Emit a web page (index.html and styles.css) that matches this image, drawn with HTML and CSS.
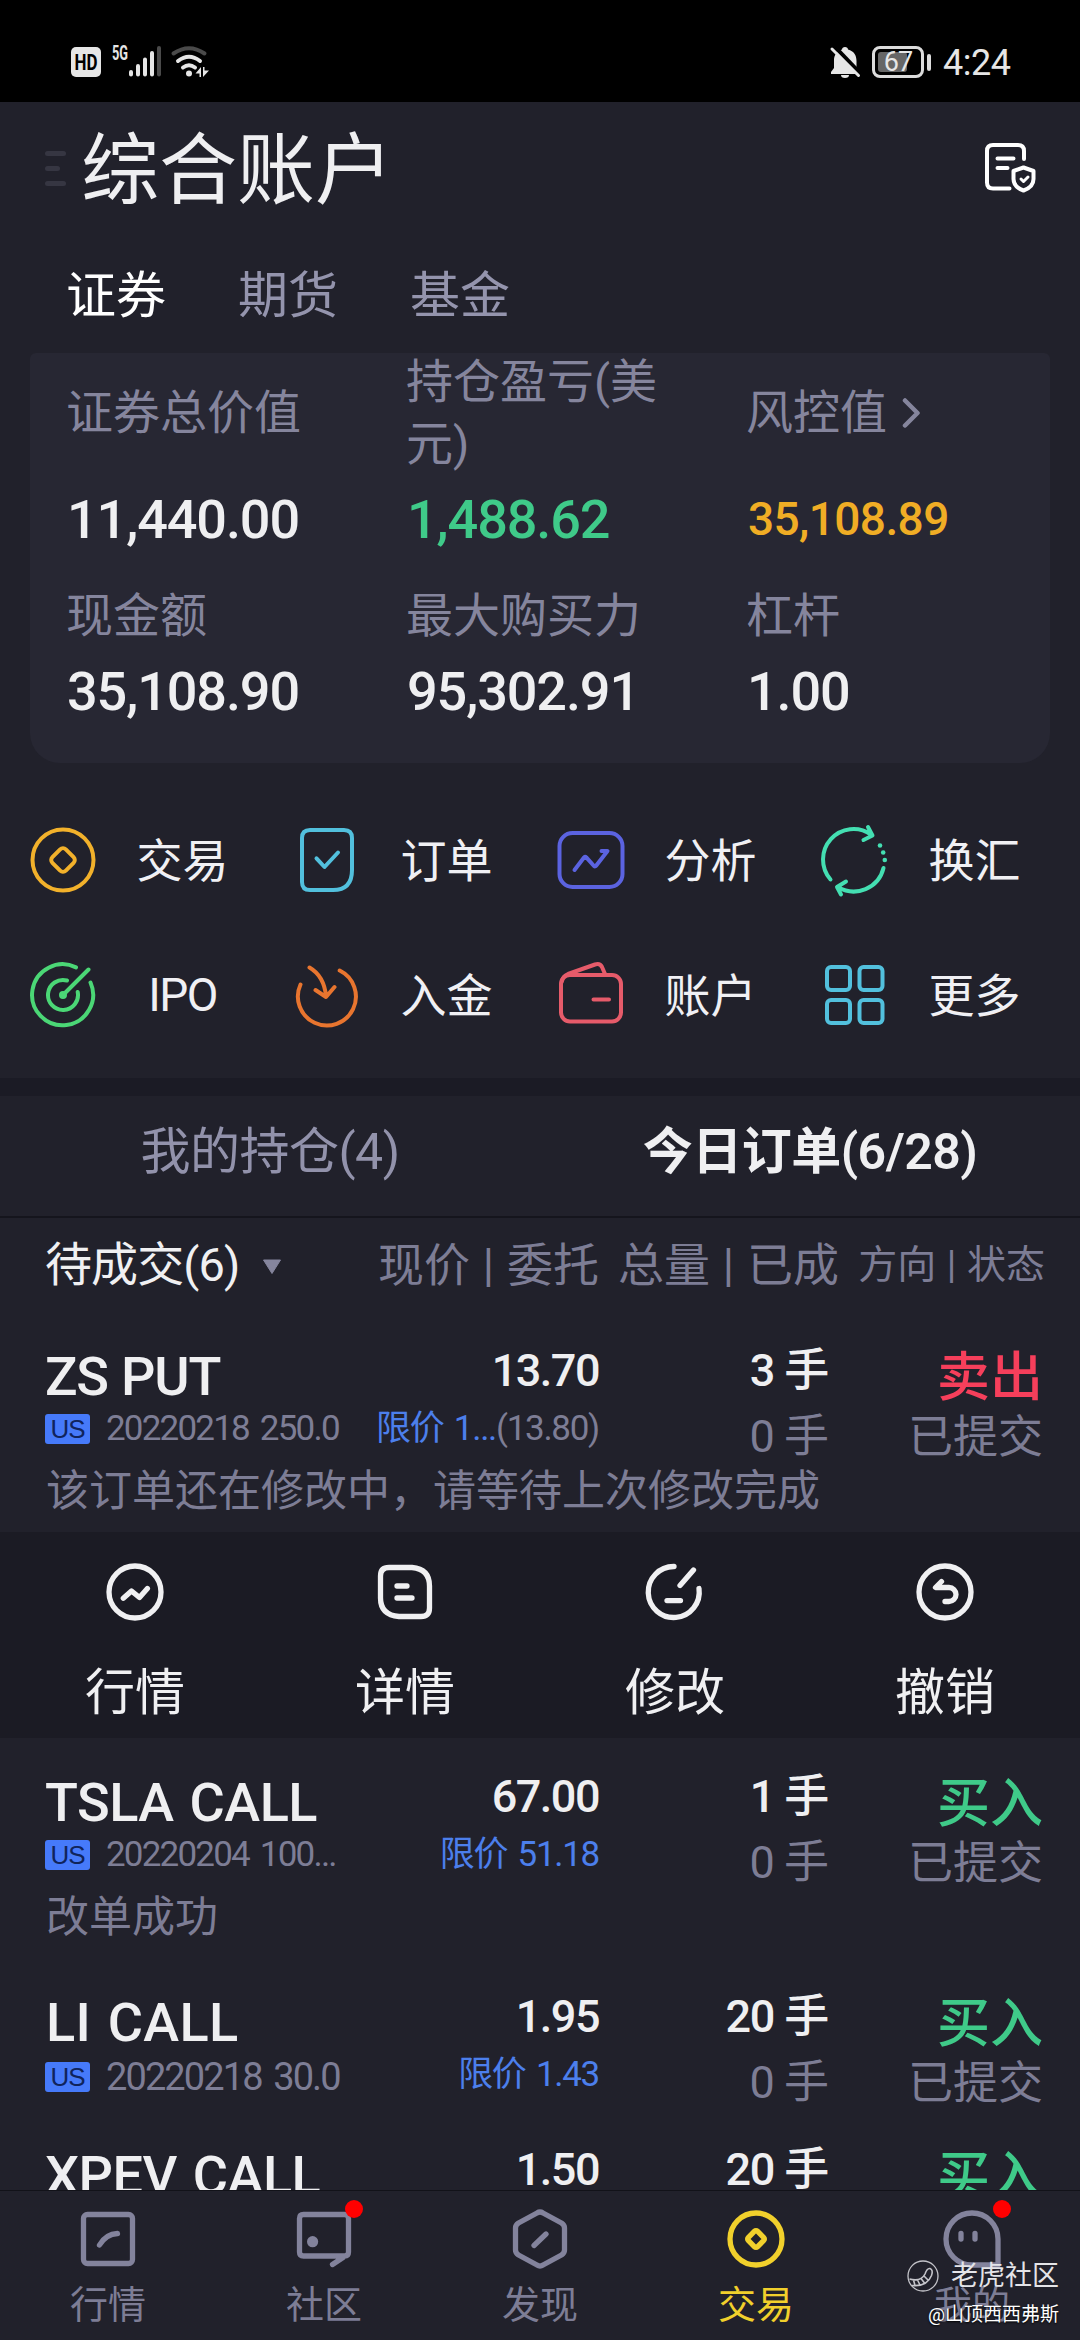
FILE: index.html
```html
<!DOCTYPE html>
<html lang="zh-CN">
<head>
<meta charset="utf-8">
<title>综合账户</title>
<link rel="stylesheet" href="styles.css">
</head>
<body>
<div class="status">
  <svg class="status-left" viewBox="66 40 150 44" width="150" height="44">
    <rect x="71" y="47" width="30" height="30" rx="5" fill="#e6e6e6"/>
    <text x="86" y="69.500" text-anchor="middle" class="hd" textLength="23" lengthAdjust="spacingAndGlyphs">HD</text>
    <text x="112" y="59.500" class="net" textLength="16" lengthAdjust="spacingAndGlyphs">5G</text>
    <g stroke-width="4" stroke-linecap="round" stroke="#e6e6e6">
      <path d="M131 72v2.500M138 66v8.500M145 59.500v15M152 53v21.500"/>
      <path d="M159 48v26.500" stroke="#4a4a4a"/>
    </g>
    <g fill="none" stroke-width="4" stroke-linecap="round" stroke="#e6e6e6">
      <path d="M173.500 53.500q15.500-10.500 31 0" stroke="#4a4a4a"/>
      <path d="M178 61q11-8.500 22 0M183 67.500q6-4.500 12 0"/>
    </g>
    <circle cx="189" cy="73.500" r="3" fill="#e6e6e6"/>
    <path d="M201 67v10h-1.500v-3.500h-4zM203 77V67h1.500v3.500h4.500z" fill="#e6e6e6"/>
  </svg>
  <svg class="bell" viewBox="829 44 34 36" width="34" height="36">
    <path d="M845 47c1.800 0 3 1 3 2.500 6 1.500 8.500 6 8.500 11.500v6l3.500 5v2h-29v-2l3-4v-8c0-5 3-9 8-10.500 0-1.500 1.200-2.500 3-2.500zM841 75h8a4 3 0 0 1-8 0z" fill="#e6e6e6"/>
    <path d="M834 46l28 29" stroke="#000" stroke-width="4"/>
    <path d="M832 49l26.500 26.500" stroke="#e6e6e6" stroke-width="3" stroke-linecap="round"/>
  </svg>
  <div class="battery"><span class="battery-fill"></span><span class="battery-num">67</span></div>
  <span class="battery-nub"></span>
  <span class="clock">4:24</span>
</div>

<header class="head">
  <div class="menu"><i></i><i class="short"></i><i></i></div>
  <h1>综合账户</h1>
  <svg class="doc" viewBox="983 141 54 54" width="54" height="54" fill="none" stroke="#fff" stroke-width="4" stroke-linecap="round" stroke-linejoin="round">
    <path d="M1024 159v-8q0-6-6-6h-25q-6 0-6 6v31.500q0 6 6 6h16.500"/>
    <path d="M997.500 158.500h16M997.500 168h10"/>
    <path d="M1023.500 167.500l10 3.500v8q0 8-10 11.500q-10-3.500-10-11.500v-8z"/>
    <path d="M1021 179l2.500 2.500 4.500-4.500" stroke-width="3"/>
  </svg>
</header>

<nav class="kinds"><b class="on">证券</b><b>期货</b><b>基金</b></nav>

<section class="card">
  <div class="metric"><div class="label tall">证券总价值</div><div class="num">11,440.00</div></div>
  <div class="metric"><div class="label tall">持仓盈亏(美<br>元)</div><div class="num up">1,488.62</div></div>
  <div class="metric"><div class="label tall">风控值<svg viewBox="0 0 20 32" width="20" height="32"><path d="M3 3.500L15.500 16 3 28.500" fill="none" stroke="#85859d" stroke-width="4.500" stroke-linecap="round" stroke-linejoin="round"/></svg></div><div class="num risk">35,108.89</div></div>
  <div class="metric"><div class="label">现金额</div><div class="num low">35,108.90</div></div>
  <div class="metric"><div class="label">最大购买力</div><div class="num low">95,302.91</div></div>
  <div class="metric"><div class="label">杠杆</div><div class="num low">1.00</div></div>
</section>

<section class="quick">
  <div class="tool"><svg viewBox="-38 -38 76 76" stroke="#f2b12b"><circle r="30.500"/><rect x="-9.500" y="-9.500" width="19" height="19" rx="4" transform="rotate(45)"/></svg><span>交易</span></div>
  <div class="tool"><svg viewBox="-38 -38 76 76" stroke="#52c0dd"><path d="M-17-30H17q8 0 8 8V10Q25 30 6 30H-17q-8 0-8-8V-22q0-8 8-8z"/><path d="M-10.500-1.700L-2.500 7 11-7.500"/></svg><span>订单</span></div>
  <div class="tool"><svg viewBox="-38 -38 76 76" stroke="#5b63e0"><rect x="-31.500" y="-27" width="63" height="54" rx="13"/><path d="M-16.500 10L-7-2.500Q-6-4-4.700-2.700L3 6Q4.200 7 5.300 5.500L16.500-9H10.500"/></svg><span>分析</span></div>
  <div class="tool"><svg viewBox="-38 -38 76 76" stroke="#44dfb2"><path d="M-24.500 19.500A30.500 30.500 0 0 1 16-25.500M28.500 8A30.500 30.500 0 0 1-17 27M13-33L17.500-24.500 8.500-20M-9 21.500L-18 27-14 34.500"/><g fill="#44dfb2" stroke="none"><circle cx="25" cy="-14.500" r="2.300"/><circle cx="28.200" cy="-7.500" r="2.300"/><circle cx="29.800" r="2.300"/></g></svg><span>换汇</span></div>
  <div class="tool"><svg viewBox="-38 -38 76 76" stroke="#4bd776"><path d="M13-27.600A30.500 30.500 0 1 0 27.500-12.500M4-14.500A15 15 0 1 0 14.700-3M0 0L25.500-25.500"/><circle r="2" fill="#4bd776"/></svg><span class="latin">IPO</span></div>
  <div class="tool"><svg viewBox="-38 -38 76 76" stroke="#e8752f"><path d="M-26.500-10.500A29 29 0 1 0 12.700-24.500M-17.500-27.500Q-3-19-1 1M-11.500-5L-1 2 7.500-8"/></svg><span>入金</span></div>
  <div class="tool"><svg viewBox="-38 -38 76 76" stroke="#e65b6a"><rect x="-30" y="-20" width="60" height="46.500" rx="9"/><path d="M-29-14Q-28-19-23-21L4-30.500Q9-32 11-28L14-21M2.500 4.500H18"/></svg><span>账户</span></div>
  <div class="tool"><svg viewBox="-38 -38 76 76" stroke="#52c0dd"><rect x="-28" y="-28" width="23" height="23" rx="4"/><rect x="4.500" y="-28" width="23" height="23" rx="4"/><rect x="-28" y="5" width="23" height="23" rx="4"/><rect x="4.500" y="5" width="23" height="23" rx="4"/></svg><span>更多</span></div>
</section>

<div class="band"></div>
<div class="switch"><div>我的持仓(4)</div><div class="on">今日订单(6/28)</div></div>

<main class="orders">
  <div class="filter">
    <div class="pick">待成交(6)<svg viewBox="0 0 20 16" width="20" height="16"><path d="M1.500 1h17L10 14.500z" fill="#85859d" stroke="#85859d" stroke-linejoin="round"/></svg></div>
    <div>现价 | 委托</div><div>总量 | 已成</div><div class="small">方向 | 状态</div>
  </div>

  <article class="order">
    <div class="name tight"><h2>ZS PUT</h2><p><em>US</em>20220218 250.0</p></div>
    <div class="price"><strong>13.70</strong><p><a>限价 1...</a>(13.80)</p></div>
    <div class="qty"><strong>3 手</strong><p>0 手</p></div>
    <div class="side"><strong class="sell">卖出</strong><p>已提交</p></div>
    <div class="note">该订单还在修改中，请等待上次修改完成</div>
  </article>

  <div class="actions">
    <div><svg viewBox="-32 -32 64 64"><circle r="26"/><path d="M-11.700 6.200L-3.500-1 4.500 5.500 12.400-3.400"/></svg>行情</div>
    <div><svg viewBox="-32 -32 64 64"><path d="M-16-24.500H7Q24.500-23 24.500-6V16q0 8.500-8.500 8.500H-6Q-24.500 23-24.500 6V-16q0-8.500 8.500-8.500zM-8-6H2M-8 6H7"/></svg>详情</div>
    <div><svg viewBox="-32 -32 64 64"><path d="M-1-25.500A25.500 25.500 0 1 0 24-3.500M18.500-22L5-6.500M-8 8.600H5.500"/></svg>修改</div>
    <div><svg viewBox="-32 -32 64 64"><circle r="26"/><path d="M-3.500-10.500L-9.500-4.500H4a7 7 0 0 1 0 14H0"/></svg>撤销</div>
  </div>

  <article class="order">
    <div class="name"><h2>TSLA CALL</h2><p><em>US</em>20220204 100...</p></div>
    <div class="price"><strong>67.00</strong><p><a>限价 51.18</a></p></div>
    <div class="qty"><strong>1 手</strong><p>0 手</p></div>
    <div class="side"><strong>买入</strong><p>已提交</p></div>
    <div class="note">改单成功</div>
  </article>
  <article class="order">
    <div class="name wide"><h2>LI CALL</h2><p><em>US</em>20220218 30.0</p></div>
    <div class="price"><strong>1.95</strong><p><a>限价 1.43</a></p></div>
    <div class="qty"><strong>20 手</strong><p>0 手</p></div>
    <div class="side"><strong>买入</strong><p>已提交</p></div>
  </article>
  <article class="order">
    <div class="name"><h2>XPEV CALL</h2></div>
    <div class="price"><strong>1.50</strong></div>
    <div class="qty"><strong>20 手</strong></div>
    <div class="side"><strong>买入</strong></div>
  </article>
</main>

<footer class="tabbar">
  <div><svg viewBox="-32 -32 64 64"><rect x="-24.500" y="-24.500" width="49" height="49" rx="4"/><path d="M-8.500 6Q-2-5 9.500-5.500"/></svg>行情</div>
  <div><svg viewBox="-32 -32 64 64"><path d="M-20.500-24.500h41q4 0 4 4V13q0 4-4 4h-41q-4 0-4-4V-20.500q0-4 4-4zM19 18.500L8.500 25.500"/><circle cx="-11.400" cy="2.700" r="5.600" fill="#83839c" stroke="none"/></svg><i class="dot"></i>社区</div>
  <div><svg viewBox="-32 -32 64 64"><path d="M-3-26Q0-28 3-26L21.500-16Q24.500-14 24.500-11V11Q24.500 14 21.500 16L3 26Q0 28-3 26L-21.500 16Q-24.500 14-24.500 11V-11Q-24.500-14-21.500-16zM-6 6.500L6-5"/></svg>发现</div>
  <div class="on"><svg viewBox="-32 -32 64 64"><circle r="26"/><rect x="-6.500" y="-6.500" width="13" height="13" rx="2" transform="rotate(45)"/></svg>交易</div>
  <div><svg viewBox="-32 -32 64 64"><path d="M26 26V0A26 26 0 1 0 0 26zM-11-5.500v5.500M3-5.500v5.500"/></svg><i class="dot"></i>我的</div>
</footer>

<div class="mark">
  <div class="mark-brand">
    <svg viewBox="-17 -17 34 34" width="34" height="34" fill="none" stroke="#c4c4ca" stroke-width="1.300"><circle r="15"/><path d="M-13.500 3Q-2 6 2-2Q4-8 7-7.500Q10.500-6 8.500-.5Q4 11-11 9.500M-9.500 4l1.500 5.500M-5.500 4l2.500 5M-2 2.500l3.500 4.500M1 0l4 4" stroke-width="1.600"/></svg>
    <span>老虎社区</span>
  </div>
  <div class="mark-user">@山顶西西弗斯</div>
</div>
</body>
</html>
```
FILE: styles.css
```css
* { box-sizing: border-box; margin: 0; padding: 0; }
body {
  position: relative;
  width: 1080px;
  height: 2340px;
  display: flex;
  flex-direction: column;
  overflow: hidden;
  background: #21212b;
  color: #efeff1;
  font-family: Roboto, "Noto Sans CJK SC", sans-serif;
  white-space: nowrap;
}
svg { display: block; flex: none; }
i, em { font-style: normal; }

.status {
  flex: none;
  height: 102px;
  padding: 40px 0 0 66px;
  background: #000;
  display: flex;
  align-items: flex-start;
  color: #e6e6e6;
}
.hd { font: 700 22px Roboto, sans-serif; fill: #000; }
.net { font: 700 20px Roboto, sans-serif; fill: #e6e6e6; }
.bell { margin: 4px 0 0 613px; }
.battery {
  position: relative;
  width: 52px;
  height: 32px;
  margin: 6px 0 0 9px;
  border: 3px solid #dcdcdc;
  border-radius: 8px;
  font-size: 27px;
  line-height: 27px;
  text-align: center;
}
.battery-fill { position: absolute; left: 3px; top: 3px; width: 29px; height: 20px; border-radius: 3px; background: #666; }
.battery-num { position: relative; letter-spacing: -1px; }
.battery-nub { width: 4px; height: 17px; margin: 14px 0 0 3px; border-radius: 2px; background: #dcdcdc; }
.clock { margin: 3px 0 0 12px; font-size: 36px; line-height: 40px; letter-spacing: -.5px; }

.head { flex: none; height: 132px; padding: 0 43px 0 45px; display: flex; align-items: center; }
.menu { width: 21px; display: flex; flex-direction: column; gap: 10px; }
.menu i { height: 5px; border-radius: 3px; background: #363642; }
.menu .short { width: 15px; }
h1 { margin-left: 15px; flex: 1; font-size: 78px; line-height: 100px; font-weight: 400; padding-top: 7px; }

.kinds { flex: none; height: 119px; padding: 5px 0 0 66px; display: flex; align-items: center; gap: 72px; }
.kinds b { font-size: 50px; line-height: 70px; font-weight: 400; color: #9494ad; }
.kinds .on { color: #fff; }

.card {
  flex: none;
  height: 410px;
  margin: 0 30px;
  padding-left: 36px;
  border-radius: 6px 6px 30px 30px;
  background: #272733;
  display: grid;
  grid-template-columns: 340px 340px 1fr;
  grid-template-rows: 233px 1fr;
}
.label { height: 60px; display: flex; align-items: center; font-size: 47px; line-height: 62px; color: #85859d; }
.label.tall { height: 124px; margin: -2px 0 15px; }
.label svg { margin-left: 15px; }
.num { font-size: 54px; line-height: 60px; font-weight: 500; letter-spacing: -1.1px; padding-left: 1px; }
.num.low { margin-top: 16px; }
.num.up { color: #3fca89; }
.num.risk { margin-top: -1px; padding-left: 2px; font-size: 46px; letter-spacing: -.6px; color: #f0ad25; }

.quick { flex: none; height: 315px; padding: 29px 0 0 19px; display: grid; grid-template: 135px 135px / repeat(4, 264px); }
.tool { display: flex; align-items: center; font-size: 46px; line-height: 60px; color: #f0f0f4; }
.tool svg { width: 76px; height: 76px; margin: 0 6px; fill: none; stroke-width: 4; stroke-linecap: round; stroke-linejoin: round; }
.tool span { width: 151px; padding-top: 2px; text-align: center; }
.tool .latin { padding-top: 0; letter-spacing: -1.5px; }

.band { flex: none; height: 18px; background: #1b1b25; }
.switch {
  flex: none;
  height: 122px;
  border-bottom: 2px solid #15151d;
  display: grid;
  grid-template-columns: 1fr 1fr;
  align-items: center;
  text-align: center;
  padding-bottom: 8px;
  font-size: 50px;
  line-height: 70px;
  color: #9292ab;
  letter-spacing: -.5px;
}
.switch .on { color: #efeff1; font-weight: 600; }

.orders { flex: none; height: 972px; overflow: hidden; }
.filter { height: 94px; padding-left: 45px; display: grid; grid-template-columns: 295px 259px 240px 206px; align-items: center; text-align: right; font-size: 46px; line-height: 60px; color: #7d7d95; word-spacing: 1.5px; }
.pick { display: flex; align-items: center; font-size: 47px; letter-spacing: -.9px; color: #f0f0f2; }
.pick svg { margin: 4px 0 0 23px; }
.filter .small { font-size: 39px; word-spacing: 1px; }

.order { padding-left: 45px; display: grid; grid-template-columns: 295px 259px 229px 215px; grid-template-rows: 153px; color: #7d7d95; text-align: right; }
.order strong { display: block; font-size: 45px; line-height: 50px; font-weight: 500; color: #efeff1; }
.name { padding-top: 35px; text-align: left; }
.name h2 { font-size: 54px; line-height: 60px; font-weight: 500; letter-spacing: -.5px; word-spacing: 3px; color: #efeff1; }
.name p { display: flex; align-items: center; height: 44px; font-size: 35px; line-height: 44px; letter-spacing: -1.8px; word-spacing: 4px; }
.name.tight h2 { letter-spacing: -1.2px; word-spacing: 1px; }
.name.wide h2 { padding-left: 1px; letter-spacing: .3px; }
.name.wide p { font-size: 38px; letter-spacing: -1.9px; padding-top: 3px; }
.name em { flex: none; width: 45px; height: 30px; margin-right: 16px; border-radius: 3px; background: #467afa; color: #10245c; font: 26px/31px "Liberation Sans", Arial, sans-serif; letter-spacing: -1px; text-align: center; }
.price { padding-top: 34px; }
.price strong { letter-spacing: -1.5px; }
.price p { padding-top: 11px; font-size: 35px; line-height: 44px; letter-spacing: -1.3px; word-spacing: 3px; }
.price a { color: #4c7fec; }
.qty { padding-top: 34px; }
.qty strong { letter-spacing: -1.2px; }
.qty p { padding-top: 16px; font-size: 45px; line-height: 50px; letter-spacing: -1px; }
.side { padding-top: 37px; }
.side strong { font-size: 53px; line-height: 58px; color: #3fca89; }
.side .sell { color: #f63f5b; }
.side p { padding-top: 6px; font-size: 45px; line-height: 50px; }
.note { grid-column: 1 / -1; height: 67px; padding-left: 1px; text-align: left; font-size: 43px; line-height: 53px; }

.actions { height: 206px; background: #1b1b24; display: grid; grid-template-columns: repeat(4, 270px); font-size: 50px; line-height: 70px; color: #f0f0f2; }
.actions div { padding-top: 28px; display: flex; flex-direction: column; align-items: center; gap: 34px; }
.actions svg { width: 64px; height: 64px; fill: none; stroke: #f0f0f2; stroke-width: 5.3; stroke-linecap: round; stroke-linejoin: round; }

.tabbar { flex: none; height: 150px; border-top: 1px solid #121219; display: grid; grid-template-columns: repeat(5, 216px); font-size: 38px; line-height: 50px; color: #7d7d95; }
.tabbar div { position: relative; padding-top: 16px; display: flex; flex-direction: column; align-items: center; gap: 9px; }
.tabbar svg { width: 64px; height: 64px; fill: none; stroke: #83839c; stroke-width: 5.3; stroke-linecap: round; stroke-linejoin: round; }
.tabbar .on { color: #f1d02c; }
.tabbar .on svg { stroke: #f1d02c; }
.dot { position: absolute; left: 129px; top: 9px; width: 18px; height: 18px; border-radius: 50%; background: #f00; }

.mark { position: absolute; right: 21px; top: 2256px; display: flex; flex-direction: column; align-items: flex-end; color: #e4e4e8; }
.mark-brand { display: flex; align-items: center; gap: 11px; height: 40px; font-size: 27px; line-height: 40px; }
.mark-user { font-size: 19px; line-height: 38px; color: #fff; text-shadow: 0 1px 2px #000; }
```
